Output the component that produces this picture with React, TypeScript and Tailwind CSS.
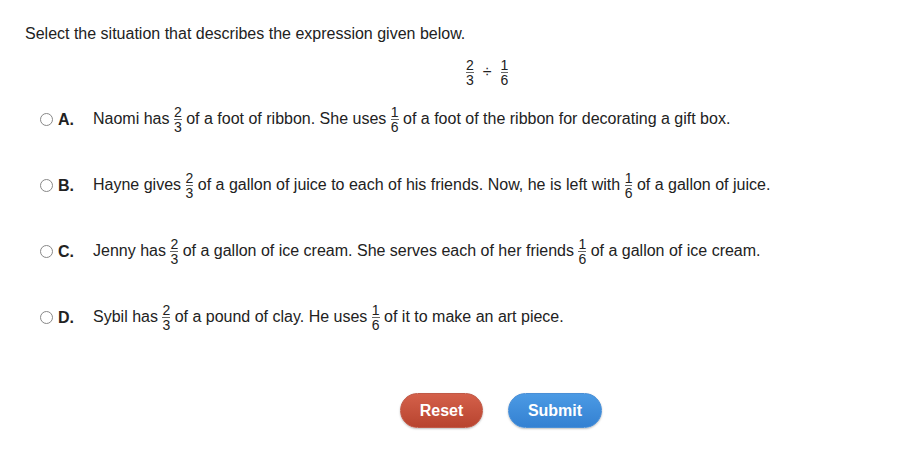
import React from 'react';

const Frac = ({ n, d }: { n: string; d: string }) => (
  <span className="inline-flex flex-col items-center align-middle text-[14px] leading-[12px]">
    <span className="border-b border-[#666] pb-[1px]">{n}</span>
    <span className="pt-[1px]">{d}</span>
  </span>
);

const options = [
  {
    letter: 'A.',
    parts: ['Naomi has', 'of a foot of ribbon. She uses', 'of a foot of the ribbon for decorating a gift box.'],
  },
  {
    letter: 'B.',
    parts: ['Hayne gives', 'of a gallon of juice to each of his friends. Now, he is left with', 'of a gallon of juice.'],
  },
  {
    letter: 'C.',
    parts: ['Jenny has', 'of a gallon of ice cream. She serves each of her friends', 'of a gallon of ice cream.'],
  },
  {
    letter: 'D.',
    parts: ['Sybil has', 'of a pound of clay. He uses', 'of it to make an art piece.'],
  },
];

export default function App() {
  return (
    <div className="w-[898px] h-[457px] bg-white text-[#222] text-[16px] font-['Liberation_Sans',Arial,sans-serif] pt-[24px] pl-[25px]">
      <p className="leading-[20px]">Select the situation that describes the expression given below.</p>

      <div className="flex justify-start pl-[441px] mt-[11px] h-[34px] items-center">
        <Frac n="2" d="3" />
        <span className="mx-[9px] text-[16px]">÷</span>
        <Frac n="1" d="6" />
      </div>

      <div className="flex flex-col gap-[37px] mt-[16px]">
        {options.map((o) => (
          <div key={o.letter} className="flex items-center h-[29px] pl-[15px]">
            <span className="w-[13px] h-[13px] rounded-full border border-[#888] bg-white shrink-0" />
            <span className="font-bold w-[40px] pl-[5px] shrink-0">{o.letter}</span>
            <span className="whitespace-nowrap">
              {o.parts[0]}{' '}
              <Frac n="2" d="3" />
              {' '}{o.parts[1]}{' '}
              <Frac n="1" d="6" />
              {' '}{o.parts[2]}
            </span>
          </div>
        ))}
      </div>

      <div className="flex gap-[25px] pl-[375px] mt-[61px]">
        <button className="w-[83px] h-[35px] rounded-full bg-gradient-to-b from-[#d4604a] to-[#b8442f] text-white font-bold border border-[#c05a48] shadow-[0_1px_2px_rgba(0,0,0,0.25)]">
          Reset
        </button>
        <button className="w-[94px] h-[35px] rounded-full bg-gradient-to-b from-[#4b9ae4] to-[#3481d2] text-white font-bold border border-[#4a8fd6] shadow-[0_1px_2px_rgba(0,0,0,0.25)]">
          Submit
        </button>
      </div>
    </div>
  );
}
